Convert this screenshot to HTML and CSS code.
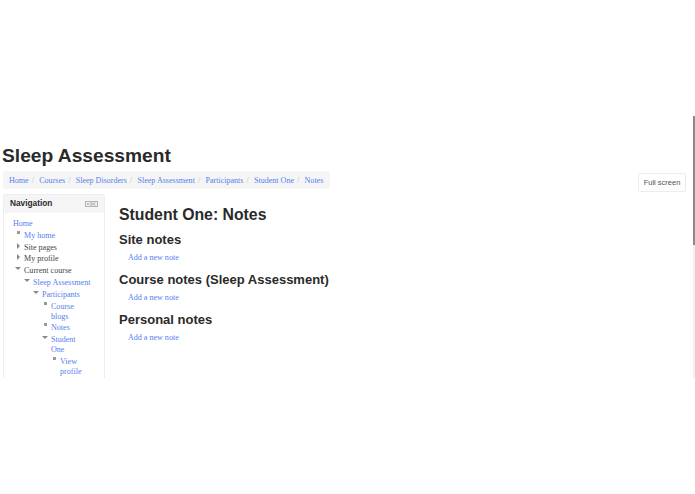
FILE: index.html
```html
<html>
    <head>
        <link rel="stylesheet" href="styles.css">
    </head>
    <body>
        <div class="frame">
            <div class="page">
                <h1 class="site-title">Sleep Assessment</h1>
                <div class="top-row">
                    <ul class="breadcrumb">
                        <li><a href="#">Home</a></li>
                        <li><a href="#">Courses</a></li>
                        <li><a href="#">Sleep Disorders</a></li>
                        <li><a href="#">Sleep Assessment</a></li>
                        <li><a href="#">Participants</a></li>
                        <li><a href="#">Student One</a></li>
                        <li><a href="#">Notes</a></li>
                    </ul>
                    <button class="full-screen">Full screen</button>
                </div>
                <div class="columns">
                    <div class="block">
                        <div class="block-header">
                            <span class="block-title">Navigation</span>
                            <span class="block-controls">
                                <svg width="13" height="6" viewBox="0 0 13 6">
                                    <rect x="0.5" y="0.5" width="5.500" height="5" fill="#eee" stroke="#b5b5b5"/>
                                    <rect x="7" y="0.5" width="5.500" height="5" fill="#eee" stroke="#b5b5b5"/>
                                    <path d="M2 3h2" stroke="#999"/>
                                    <path d="M10 1.500l-1.500 1.500 1.500 1.500" fill="none" stroke="#999"/>
                                </svg>
                            </span>
                        </div>
                        <div class="block-body">
                            <a class="nav-home" href="#">Home</a>
                            <ul class="tree">
                                <li class="leaf"><a href="#">My home</a></li>
                                <li class="closed">Site pages</li>
                                <li class="closed">My profile</li>
                                <li class="open">Current course
                                    <ul class="tree">
                                        <li class="open"><a href="#">Sleep Assessment</a>
                                            <ul class="tree">
                                                <li class="open"><a href="#">Participants</a>
                                                    <ul class="tree">
                                                        <li class="leaf"><a href="#">Course blogs</a></li>
                                                        <li class="leaf"><a href="#">Notes</a></li>
                                                        <li class="open"><a href="#">Student One</a>
                                                            <ul class="tree">
                                                                <li class="leaf"><a href="#">View profile</a></li>
                                                            </ul>
                                                        </li>
                                                    </ul>
                                                </li>
                                            </ul>
                                        </li>
                                    </ul>
                                </li>
                            </ul>
                        </div>
                    </div>
                    <div class="main">
                        <h2 class="main-title">Student One: Notes</h2>
                        <h3 class="section-title">Site notes</h3>
                        <a class="add-note" href="#">Add a new note</a>
                        <h3 class="section-title">Course notes (Sleep Assessment)</h3>
                        <a class="add-note" href="#">Add a new note</a>
                        <h3 class="section-title">Personal notes</h3>
                        <a class="add-note" href="#">Add a new note</a>
                    </div>
                </div>
            </div>
            <div class="scrollbar"><div class="thumb"></div></div>
        </div>
    </body>
</html>
```

FILE: styles.css
```css
html, body {
    margin: 0;
    padding: 0;
    background-color: #fff;
    overflow: hidden;
}

a {
    color: #5580f0;
    text-decoration: none;
}

ul {
    margin: 0;
    padding: 0;
    list-style: none;
}

.frame {
    display: flex;
    height: 262px;
    margin-top: 116px;
    overflow: hidden;
}

.page {
    flex-grow: 1;
    min-width: 0;
    padding: 0 7px 0 2px;
}

.site-title {
    margin: 0;
    padding-top: 28px;
    font: bold 19.2px/24px "Liberation Sans", Arial, sans-serif;
    color: #2a2a2a;
}

.top-row {
    display: flex;
    justify-content: space-between;
    align-items: flex-start;
    margin-top: 3px;
}

.breadcrumb {
    display: flex;
    box-sizing: border-box;
    height: 18px;
    margin-left: 1px;
    padding: 1px 7px 0 6px;
    align-items: center;
    background-color: #f5f5f5;
    border-radius: 2px;
    font: 8.05px "Liberation Serif", serif;
}
.breadcrumb li + li::before {
    content: "/";
    color: #bbb;
    padding: 0 5.3px 0 3px;
}

.full-screen {
    height: 19px;
    width: 48px;
    padding: 0;
    margin-top: 2px;
    background-color: #fff;
    border: 1px solid #ececec;
    border-radius: 2px;
    font: 7.5px "Liberation Sans", Arial, sans-serif;
    color: #555;
}

.columns {
    display: flex;
    margin-top: 2px;
}

.block {
    box-sizing: border-box;
    flex: none;
    width: 102px;
    height: 300px;
    margin-left: 1px;
    border: 1px solid #eee;
    border-radius: 2px;
}
.block-header {
    display: flex;
    justify-content: space-between;
    align-items: center;
    height: 18px;
    padding: 0 6px 2px 6px;
    box-sizing: border-box;
    background-color: #f5f5f5;
}
.block-title {
    font: bold 8.3px "Liberation Sans", Arial, sans-serif;
    color: #2a2a2a;
}
.block-controls {
    display: flex;
    margin-top: 2px;
}
.block-body {
    padding: 6px 0 0 9px;
    font: 8.05px/10px "Liberation Serif", serif;
    color: #444;
}
.nav-home {
    display: block;
    height: 10px;
}

.tree {
    padding-right: 4px;
}
.tree > li {
    position: relative;
    padding-left: 11px;
    margin-top: 1.8px;
}
.tree .tree {
    margin-left: -2px;
}
.tree > li::before {
    content: "";
    position: absolute;
}
.leaf::before {
    left: 4px;
    top: 0;
    width: 3px;
    height: 3px;
    background-color: #999;
}
.closed::before {
    left: 4px;
    top: 0;
    border-left: 3px solid #888;
    border-top: 3px solid transparent;
    border-bottom: 3px solid transparent;
}
.open::before {
    left: 2px;
    top: 1px;
    border-top: 3px solid #888;
    border-left: 3px solid transparent;
    border-right: 3px solid transparent;
}

.main {
    flex-grow: 1;
    padding: 11px 0 0 14px;
    color: #2a2a2a;
    font-family: "Liberation Sans", Arial, sans-serif;
}
.main-title {
    margin: 0;
    font-size: 15.8px;
    line-height: 19px;
}
.section-title {
    margin: 7px 0 0;
    font-size: 13px;
    line-height: 18px;
}
.add-note {
    display: block;
    margin: 3px 0 0 9px;
    height: 12px;
    font: 8.05px/12px "Liberation Serif", serif;
}

.scrollbar {
    flex: none;
    width: 2px;
    background-color: #f0f0f0;
}
.thumb {
    height: 129px;
    background-color: #8a8a8a;
}
```
